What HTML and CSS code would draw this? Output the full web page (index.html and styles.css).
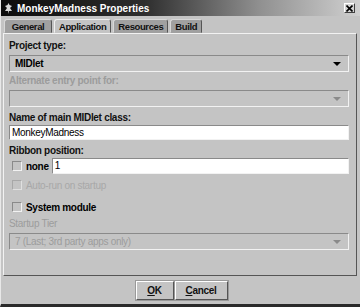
FILE: index.html
```html
<!DOCTYPE html>
<html lang="en">
<head>
    <meta charset="UTF-8">
    <title>MonkeyMadness Properties</title>
    <link rel="stylesheet" href="styles.css">
</head>
<body>

<div class="window">
    <!-- Title bar -->
    <div class="titlebar">
        <svg class="app-icon" width="9" height="11" viewBox="0 0 9 11">
            <path d="M4.5 0 L5.5 2 L8 3 L6 5 L8 8 L5 8 L4.5 11 L4 8 L1 8 L3 5 L1 3 L3.5 2 Z" fill="#d8d8d8"/>
        </svg>
        <span class="title">MonkeyMadness Properties</span>
        <button class="close-btn">
            <svg width="7" height="7" viewBox="0 0 7 7"><path d="M0.5 0.5 L6.5 6.5 M6.5 0.5 L0.5 6.5" stroke="#000" stroke-width="1.6"/></svg>
        </button>
    </div>

    <!-- Tabs -->
    <div class="tabs">
        <div class="tab">General</div>
        <div class="tab active">Application</div>
        <div class="tab">Resources</div>
        <div class="tab">Build</div>
    </div>

    <!-- Application panel -->
    <div class="panel">
        <label class="field-label">Project type:</label>
        <div class="combo">
            <span>MIDlet</span>
            <span class="arrow"></span>
        </div>

        <label class="field-label disabled">Alternate entry point for:</label>
        <div class="combo disabled">
            <span></span>
            <span class="arrow"></span>
        </div>

        <label class="field-label tight">Name of main MIDlet class:</label>
        <div class="textfield">MonkeyMadness</div>

        <label class="field-label tight">Ribbon position:</label>
        <div class="ribbon-row">
            <span class="checkbox"></span>
            <span class="check-text">none</span>
            <div class="textfield">1</div>
        </div>

        <div class="check-row disabled">
            <span class="checkbox"></span>
            <span class="check-text">Auto-run on startup</span>
        </div>

        <div class="check-row">
            <span class="checkbox"></span>
            <span class="check-text">System module</span>
        </div>

        <label class="field-label disabled plain">Startup Tier</label>
        <div class="combo disabled">
            <span>7 (Last; 3rd party apps only)</span>
            <span class="arrow"></span>
        </div>
    </div>

    <!-- Buttons -->
    <div class="buttons">
        <button class="btn ok"><u>O</u>K</button>
        <button class="btn cancel"><u>C</u>ancel</button>
    </div>
</div>

</body>
</html>
```
FILE: styles.css
```css
:root {
    --face: #c4c4c4;
    --light: #f2f2f2;
    --shadow: #8a8a8a;
    --dark: #404040;
    --disabled: #9c9c9c;
}

body {
    margin: 0;
    font-family: 'Liberation Sans', Arial, sans-serif;
    font-size: 10px;
    letter-spacing: -0.3px;
}

.window {
    width: 360px;
    height: 307px;
    background-color: var(--face);
    border-bottom: 3px solid #2a2a2a;
    border-left: 1px solid #e8e8e8;
    box-sizing: border-box;
    display: flex;
    flex-direction: column;
}

.titlebar {
    height: 16px;
    display: flex;
    align-items: center;
    padding: 0 3px;
    background: linear-gradient(to right, #0c0c0c 0%, #2e2e2e 40%, #909090 72%, #d0d0d0 100%);
    color: white;
}

.app-icon {
    margin-right: 4px;
}

.title {
    font-weight: bold;
    letter-spacing: 0;
    flex: 1;
}

.close-btn {
    width: 11px;
    height: 10px;
    padding: 0;
    margin-right: 2px;
    display: flex;
    align-items: center;
    justify-content: center;
    background-color: #d4d4d4;
    border: 1px solid;
    border-color: #ffffff #404040 #404040 #ffffff;
}

.tabs {
    display: flex;
    padding: 3px 0 0 3px;
    gap: 2px;
    height: 14px;
}

.tab {
    font-size: 9.5px;
    letter-spacing: -0.4px;
    font-weight: bold;
    line-height: 13px;
    box-sizing: border-box;
    text-align: center;
    padding: 0 4px;
    background-color: #a0a0a0;
    border: 1px solid;
    border-color: #d8d8d8 #555 transparent #d8d8d8;
    border-radius: 3px 3px 0 0;
    color: #111;
}

.tab:first-child {
    min-width: 48px;
}

.tab.active {
    background-color: var(--face);
    border-color: #f0f0f0 #555 transparent #f0f0f0;
}

.panel {
    margin: 0 3px 0 2px;
    height: 243px;
    border: 1px solid;
    border-color: var(--light) #555 #555 var(--light);
    padding: 5px 7px 0 5px;
    box-sizing: border-box;
    display: flex;
    flex-direction: column;
}

.field-label {
    font-weight: bold;
    height: 14px;
    line-height: 14px;
    margin-bottom: 2px;
    color: #111;
}

.field-label.tight {
    margin-top: 2px;
    margin-bottom: 0;
}

.field-label.disabled {
    color: var(--disabled);
}

.field-label.plain {
    font-weight: normal;
}

.combo {
    height: 17px;
    flex-shrink: 0;
    box-sizing: border-box;
    display: flex;
    align-items: center;
    padding: 0 5px;
    border: 1px solid;
    border-color: var(--shadow) var(--light) var(--light) var(--shadow);
    font-weight: bold;
    margin-bottom: 2px;
}

.combo span:first-child {
    flex: 1;
}

.combo.disabled {
    color: var(--disabled);
    font-weight: normal;
}

.arrow {
    width: 0;
    height: 0;
    border-left: 4px solid transparent;
    border-right: 4px solid transparent;
    border-top: 4px solid #000;
    margin-right: 2px;
}

.combo.disabled .arrow {
    border-top-color: #8a8a8a;
}

.textfield {
    height: 15px;
    flex-shrink: 0;
    box-sizing: border-box;
    background-color: white;
    border: 1px solid;
    border-color: var(--shadow) var(--light) var(--light) var(--shadow);
    padding: 0 2px;
    line-height: 13px;
    margin-bottom: 2px;
}

.ribbon-row {
    display: flex;
    align-items: center;
    height: 16px;
    flex-shrink: 0;
    margin-bottom: 4px;
}

.ribbon-row .textfield {
    flex: 1;
    height: 16px;
    line-height: 14px;
    margin: 0;
}

.checkbox {
    width: 10px;
    height: 10px;
    box-sizing: border-box;
    border: 1px solid;
    border-color: var(--shadow) var(--light) var(--light) var(--shadow);
    margin: 0 4px 0 3px;
}

.check-text {
    font-weight: bold;
    margin-right: 3px;
}

.check-row {
    display: flex;
    align-items: center;
    height: 14px;
    flex-shrink: 0;
    margin-bottom: 8px;
}

.check-row + .field-label {
    margin-top: -5px;
}

.check-row.disabled {
    color: #a8a8a8;
}

.check-row.disabled .checkbox {
    border-color: #a8a8a8 #e0e0e0 #e0e0e0 #a8a8a8;
}

.check-row.disabled .check-text {
    font-weight: normal;
}

.buttons {
    flex: 1;
    display: flex;
    justify-content: center;
    align-items: center;
    gap: 1px;
    padding-left: 2px;
}

.btn {
    font-family: 'Liberation Sans', Arial, sans-serif;
    font-size: 10px;
    letter-spacing: -0.3px;
    font-weight: bold;
    height: 19px;
    background-color: var(--face);
    border: 1px solid;
    border-color: #fff #555 #555 #fff;
    outline: 1px solid #999;
    color: #111;
    padding: 0;
}

.btn.ok {
    width: 38px;
}

.btn.cancel {
    width: 53px;
}
```
